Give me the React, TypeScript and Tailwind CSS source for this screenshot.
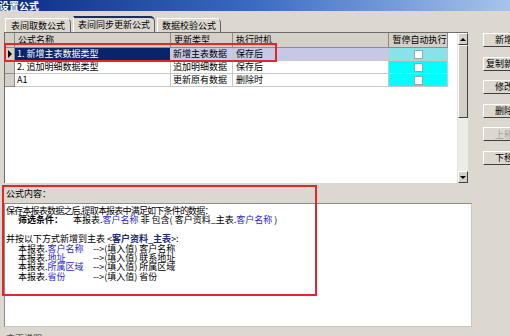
import React from 'react';

type Row = {
  name: string;
  type: string;
  time: string;
  selected?: boolean;
};

const rows: Row[] = [
  { name: '1. 新增主表数据类型', type: '新增主表数据', time: '保存后', selected: true },
  { name: '2. 追加明细数据类型', type: '追加明细数据', time: '保存后' },
  { name: 'A1', type: '更新原有数据', time: '删除时' },
];

const tabs = [
  { label: '表间取数公式', w: 'w-[66px]' },
  { label: '表间同步更新公式', w: 'w-[82px]', active: true },
  { label: '数据校验公式', w: 'w-[64px]' },
];

const buttons = [
  { label: '新增' },
  { label: '复制新增' },
  { label: '修改' },
  { label: '删除' },
  { label: '上移', disabled: true },
  { label: '下移' },
];

const mappings = [
  { field: '客户名称', target: '客户名称' },
  { field: '地址', target: '联系地址' },
  { field: '所属区域', target: '所属区域' },
  { field: '省份', target: '省份' },
];

function Checkbox() {
  return <span className="block w-[9px] h-[9px] bg-white border border-[#9aa4b0]" />;
}

function Scrollbar() {
  return (
    <div className="w-[11px] flex flex-col bg-[#eeece8] border-l border-[#e6e4e0]">
      <div className="h-[12px] bg-[#d4d0c8] border border-t-white border-l-white border-r-[#404040] border-b-[#404040] flex items-center justify-center">
        <span className="w-0 h-0 border-l-[3px] border-r-[3px] border-b-[3px] border-l-transparent border-r-transparent border-b-black" />
      </div>
      <div className="h-[73px] bg-[#d4d0c8] border border-t-white border-l-white border-r-[#404040] border-b-[#404040]" />
      <div className="flex-1" />
      <div className="h-[12px] bg-[#d4d0c8] border border-t-white border-l-white border-r-[#404040] border-b-[#404040] flex items-center justify-center">
        <span className="w-0 h-0 border-l-[3px] border-r-[3px] border-t-[3px] border-l-transparent border-r-transparent border-t-black" />
      </div>
    </div>
  );
}

function Grid() {
  const head = 'h-[15px] bg-[#d4d0c8] border-r border-b border-[#8c8c8c] flex items-center pl-[3px]';
  return (
    <div className="w-[464px] h-[151px] flex border-l border-t border-[#6c6c6c] bg-white">
      <div className="flex-1 flex flex-col">
        <div className="flex">
          <div className={`${head} w-[10px]`} />
          <div className={`${head} w-[156px]`}>公式名称</div>
          <div className={`${head} w-[62px]`}>更新类型</div>
          <div className={`${head} w-[156px]`}>执行时机</div>
          <div className={`${head} w-[59px] justify-center pl-0`}>暂停自动执行</div>
        </div>
        {rows.map((r) => (
          <div key={r.name} className="flex h-[13px]">
            <div className="w-[10px] bg-[#d4d0c8] border-r border-b border-[#8c8c8c] flex items-center justify-center">
              {r.selected && (
                <span className="w-0 h-0 border-t-[4px] border-b-[4px] border-l-[4px] border-t-transparent border-b-transparent border-l-black" />
              )}
            </div>
            <div
              className={`w-[156px] border-r border-b border-[#c8c8c8] flex items-center pl-[2px] ${
                r.selected ? 'bg-[#0a246a] text-white' : ''
              }`}
            >
              {r.name}
            </div>
            <div
              className={`w-[62px] border-r border-b border-[#c8c8c8] flex items-center pl-[2px] ${
                r.selected ? 'bg-[#c6c8e6]' : ''
              }`}
            >
              {r.type}
            </div>
            <div
              className={`w-[156px] border-r border-b border-[#c8c8c8] flex items-center pl-[3px] ${
                r.selected ? 'bg-[#c6c8e6]' : ''
              }`}
            >
              {r.time}
            </div>
            <div
              className={`w-[59px] border-r border-b border-[#c8c8c8] flex items-center justify-center ${
                r.selected ? 'bg-[#88e2ea]' : 'bg-[#00ffff]'
              }`}
            >
              <Checkbox />
            </div>
          </div>
        ))}
      </div>
      <Scrollbar />
    </div>
  );
}

function FormulaText() {
  const blue = 'text-[#2a2ad0]';
  return (
    <div className="w-[468px] h-[124px] bg-white border border-t-[#8c8c8c] border-l-[#8c8c8c] border-r-[#c8c8c8] border-b-[#c8c8c8] pl-[1px] pt-[2px] leading-[9.4px] whitespace-pre">
      <div className="tracking-[-0.8px]">保存本报表数据之后,提取本报表中满足如下条件的数据：</div>
      <div className="pl-[12px]">
        <span className="font-bold">筛选条件：</span>
        <span className="pl-[10px]">本报表.</span>
        <span className={blue}>客户名称</span>
        <span> 非 包含( 客户资料_主表.</span>
        <span className={blue}>客户名称</span>
        <span> )</span>
      </div>
      <div className="h-[9.4px]" />
      <div>
        并按以下方式新增到主表 &lt;<span className="font-bold text-[#1a2a7a]">客户资料_主表</span>&gt;:
      </div>
      {mappings.map((m) => (
        <div key={m.field} className="pl-[12px] flex">
          <span className="w-[75px]">
            本报表.<span className={blue}>{m.field}</span>
          </span>
          <span>--&gt;(填入值) {m.target}</span>
        </div>
      ))}
    </div>
  );
}

export default function App() {
  return (
    <div
      className="relative w-[510px] h-[336px] overflow-hidden bg-[#dcd8d0] text-[9px] text-black flex flex-col"
      style={{ fontFamily: '"Noto Sans CJK SC", "Noto Sans", sans-serif' }}
    >
      {/* title bar */}
      <div className="h-[11px] shrink-0 bg-gradient-to-r from-[#0c2c84] via-[#3a6cc0] to-[#a8c4ec] flex items-center">
        <span className="ml-[-1px] text-white font-bold text-[10px] leading-none">设置公式</span>
      </div>

      <div className="flex flex-1">
        <div className="w-[472px] pl-[4px] flex flex-col">
          {/* tabs */}
          <div className="mt-[5px] h-[16px] flex items-end gap-[2px] pl-[1px]">
            {tabs.map((t) => (
              <div
                key={t.label}
                className={`${t.w} flex items-center justify-center bg-[#dcd8d0] border-l border-r border-l-white border-r-[#606060] rounded-tr-[5px] ${
                  t.active
                    ? 'h-[16px] border-t-2 border-t-[#1c2c5c]'
                    : 'h-[14px] border-t border-t-white'
                }`}
              >
                {t.label}
              </div>
            ))}
          </div>

          <Grid />

          <div className="h-[20px] flex items-end pb-[3px] pl-[2px]">公式内容：</div>

          <FormulaText />

          <div className="mt-[5px] pl-[2px] text-[#303030]">变更说明：</div>
        </div>

        {/* right buttons */}
        <div className="ml-[11px] pt-[22px] flex flex-col gap-[9.6px]">
          {buttons.map((b) => (
            <div
              key={b.label}
              className={`w-[42px] h-[14px] shrink-0 bg-[#dcd8d0] border border-t-white border-l-white border-r-[#404040] border-b-[#404040] flex items-center justify-center ${
                b.disabled ? 'text-[#a0a0a0]' : ''
              }`}
            >
              {b.label}
            </div>
          ))}
        </div>
      </div>

      {/* highlight marks */}
      <div className="absolute left-[4px] top-[43px] w-[273px] h-[19px] border-2 border-[#e02828] pointer-events-none" />
      <div className="absolute left-[2px] top-[185px] w-[315px] h-[111px] border-2 border-[#e02828] pointer-events-none" />
    </div>
  );
}
